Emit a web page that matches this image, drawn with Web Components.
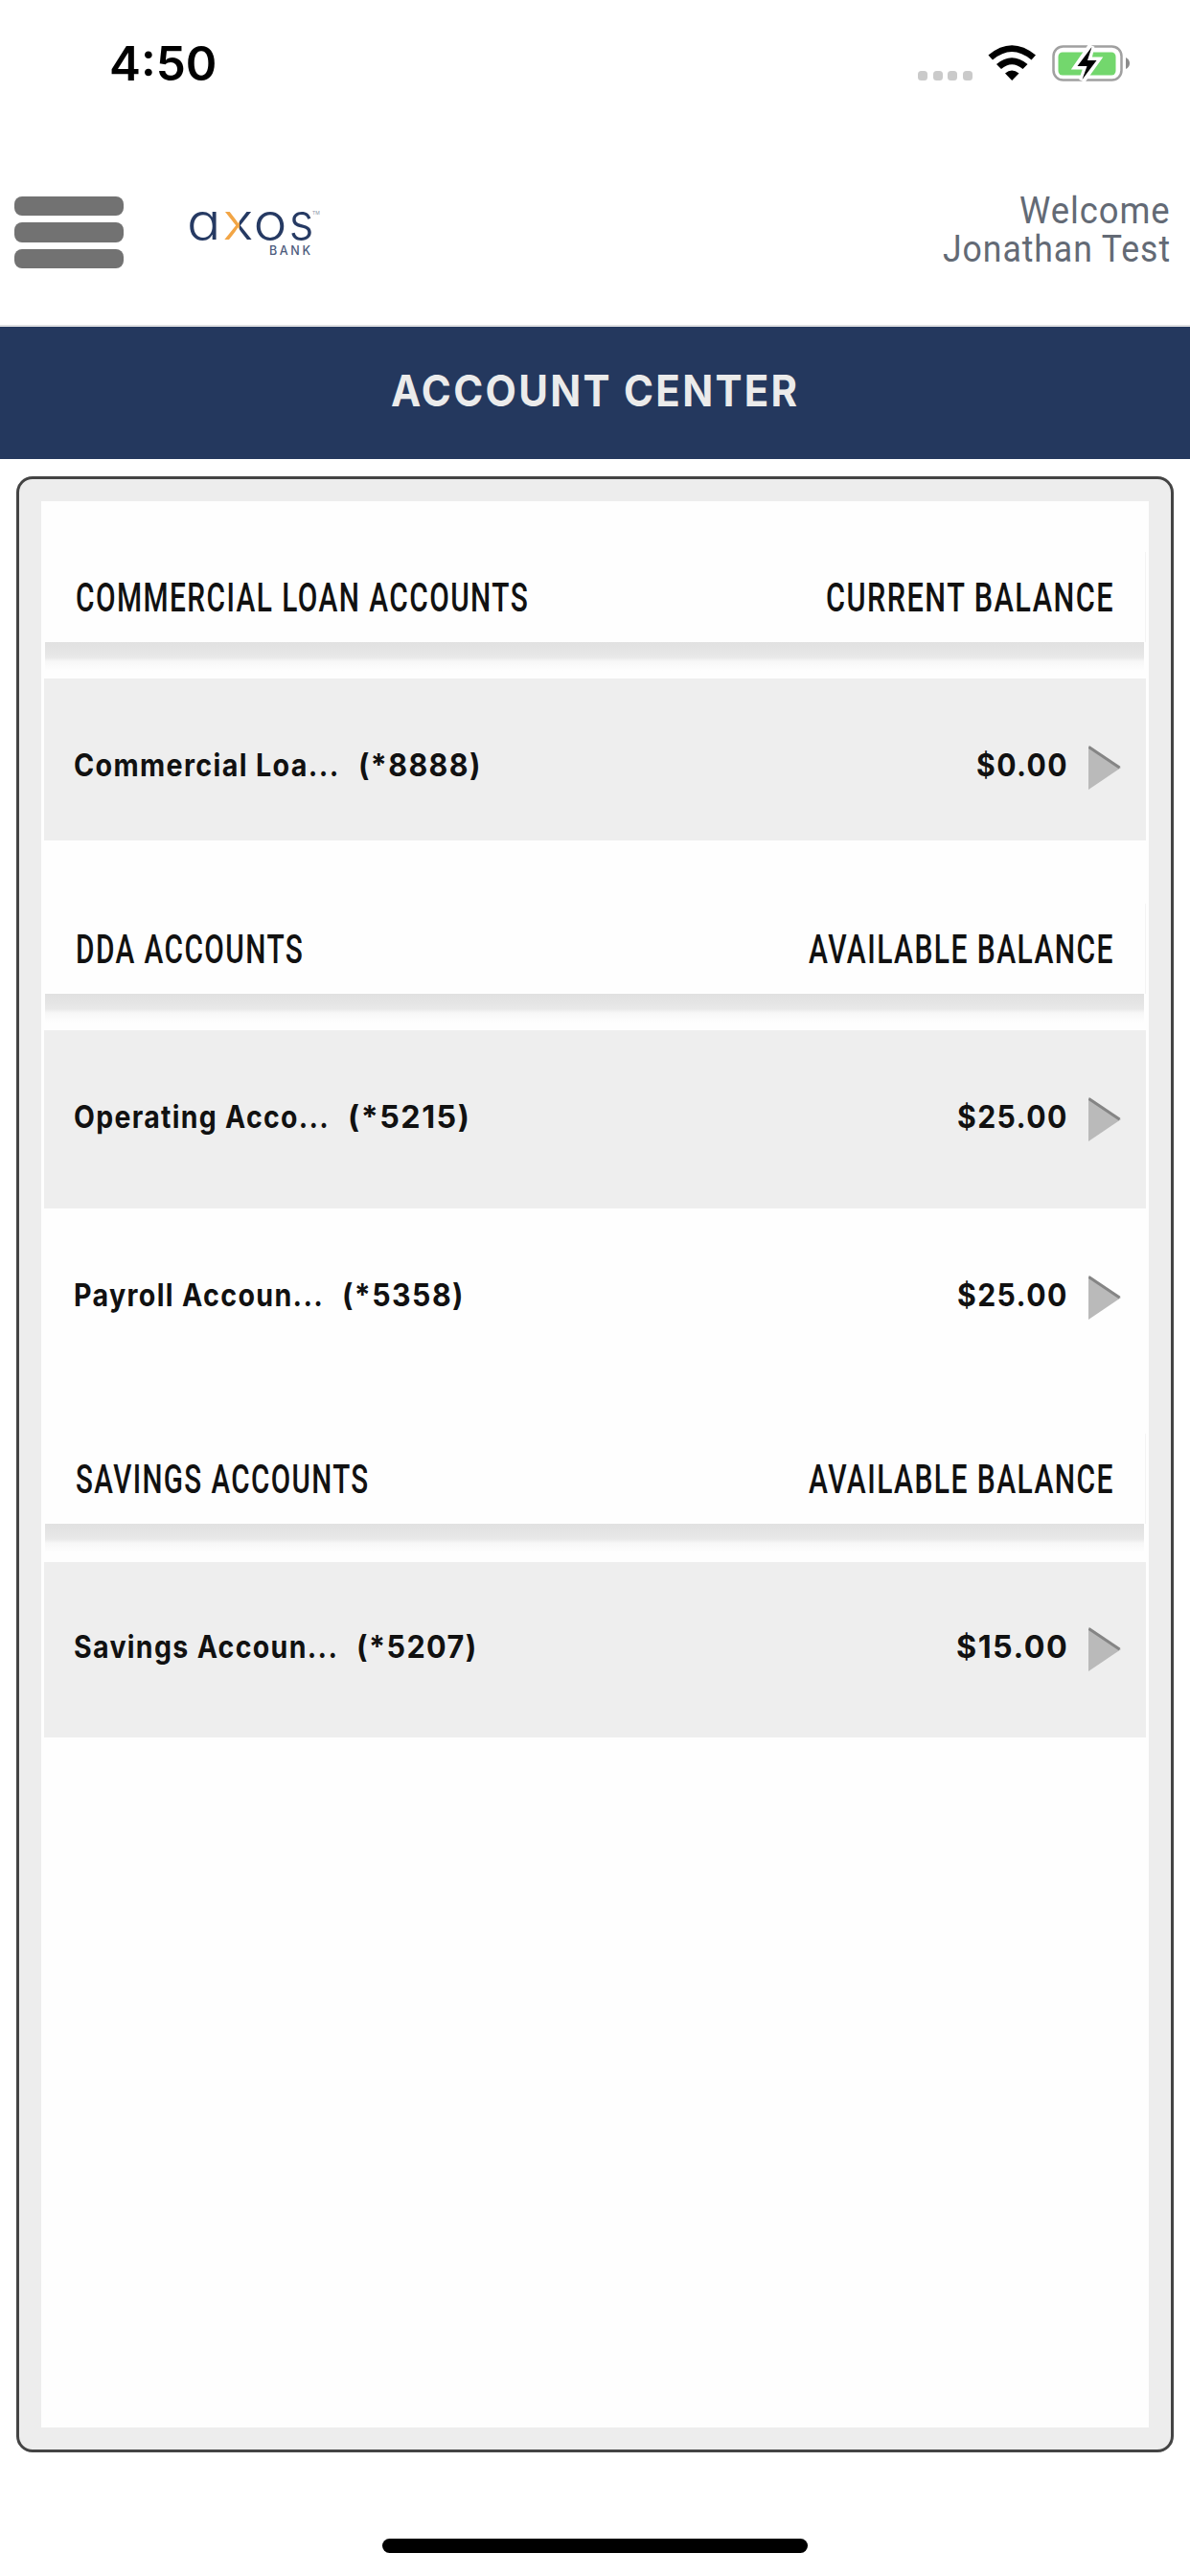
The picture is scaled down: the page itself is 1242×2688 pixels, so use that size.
<!DOCTYPE html>
<html lang="en">
<head>
<meta charset="utf-8">
<title>Account Center</title>
<style>
  body {
    margin: 0;
    background: #fff;
    font-family: Inter, "Liberation Sans", sans-serif;
    color: #111;
  }
</style>
</head>
<body>
<app-screen>
  <status-bar slot="top" time="4:50"></status-bar>
  <app-header slot="top">
    <fit-text width="158">Welcome</fit-text>
    <fit-text width="238">Jonathan Test</fit-text>
  </app-header>
  <title-bar slot="top"><fit-text width="426">ACCOUNT CENTER</fit-text></title-bar>

  <account-group style="--head: 147px; --shade: 38px">
    <fit-text slot="name" width="473">COMMERCIAL LOAN ACCOUNTS</fit-text>
    <fit-text slot="balance" width="301">CURRENT BALANCE</fit-text>
    <account-row shaded style="--height: 169px">
      <fit-text slot="name" width="278">Commercial Loa...</fit-text>
      <fit-text slot="number" width="129">(*8888)</fit-text>
      <fit-text slot="amount" width="96">$0.00</fit-text>
    </account-row>
  </account-group>

  <account-group style="--head: 160px; --shade: 38px">
    <fit-text slot="name" width="238">DDA ACCOUNTS</fit-text>
    <fit-text slot="balance" width="319">AVAILABLE BALANCE</fit-text>
    <account-row shaded style="--height: 186px">
      <fit-text slot="name" width="267">Operating Acco...</fit-text>
      <fit-text slot="number" width="128">(*5215)</fit-text>
      <fit-text slot="amount" width="116">$25.00</fit-text>
    </account-row>
    <account-row style="--height: 185px">
      <fit-text slot="name" width="261">Payroll Accoun...</fit-text>
      <fit-text slot="number" width="128">(*5358)</fit-text>
      <fit-text slot="amount" width="116">$25.00</fit-text>
    </account-row>
  </account-group>

  <account-group style="--head: 144px; --shade: 40px">
    <fit-text slot="name" width="307">SAVINGS ACCOUNTS</fit-text>
    <fit-text slot="balance" width="319">AVAILABLE BALANCE</fit-text>
    <account-row shaded style="--height: 183px; --top: 68px">
      <fit-text slot="name" width="276">Savings Accoun...</fit-text>
      <fit-text slot="number" width="127">(*5207)</fit-text>
      <fit-text slot="amount" width="117">$15.00</fit-text>
    </account-row>
  </account-group>
</app-screen>

<script>
function template(html) {
  const element = document.createElement('template');
  element.innerHTML = html;
  return element;
}

class BaseElement extends HTMLElement {
  constructor() {
    super();
    this.attachShadow({ mode: 'open' });
    this.shadowRoot.appendChild(this.constructor.template.content.cloneNode(true));
  }
}

// One line of text, condensed or stretched to the given width.
class FitText extends BaseElement {
  static template = template(`
    <style>
      :host {
        display: block;
        white-space: nowrap;
      }

      span {
        display: inline-block;
        vertical-align: top;
        transform-origin: 0 50%;
      }
    </style>
    <span><slot></slot></span>
  `);

  connectedCallback() {
    const width = Number(this.getAttribute('width'));
    const span = this.shadowRoot.querySelector('span');
    this.style.width = `${width}px`;
    span.style.transform = `scaleX(${width / span.offsetWidth})`;
  }
}

class AppScreen extends BaseElement {
  static template = template(`
    <style>
      :host {
        display: flex;
        flex-direction: column;
        height: 2688px;
      }

      main {
        flex: 1;
        box-sizing: border-box;
        margin: 18px 17px 0;
        padding: 23px;
        border: 3px solid #444;
        border-radius: 17px;
        background: #ededed;
      }

      .sheet {
        height: 100%;
        box-sizing: border-box;
        padding: 0 3px;
        background: #fefefe;
      }

      footer {
        height: 129px;
        display: flex;
        justify-content: center;
      }

      .home {
        width: 444px;
        height: 15px;
        margin-top: 90px;
        border-radius: 8px;
        background: #000;
      }
    </style>
    <slot name="top"></slot>
    <main><div class="sheet"><slot></slot></div></main>
    <footer><div class="home"></div></footer>
  `);
}

class StatusBar extends BaseElement {
  static template = template(`
    <style>
      :host {
        display: flex;
        justify-content: space-between;
        box-sizing: border-box;
        height: 132px;
        padding: 37px 62px 0 114px;
      }

      fit-text {
        font-size: 49px;
        font-weight: 600;
        line-height: 60px;
        color: #000;
      }

      svg {
        display: block;
        width: 224px;
        height: 60px;
      }
    </style>
    <fit-text width="112"></fit-text>
    <svg viewBox="956 37 224 60">
      <g fill="#cacaca">
        <rect x="958" y="74" width="10" height="10" rx="3.5"/>
        <rect x="974" y="74" width="10" height="10" rx="3.5"/>
        <rect x="989" y="74" width="10" height="10" rx="3.5"/>
        <rect x="1005" y="74" width="10" height="10" rx="3.5"/>
      </g>
      <path d="M1031.500 57.500Q1056 37 1081 57.500L1076.500 62.500Q1056 45.500 1036 62.500Z"/>
      <path d="M1040 67Q1056 53.500 1072.500 67L1067.500 72Q1056 62.500 1045 72Z"/>
      <path d="M1049 76.500Q1056 70.500 1063.500 76.500L1056.200 84Z"/>
      <rect x="1099.500" y="48.500" width="71" height="35" rx="10" fill="none" stroke="#a0a0a0" stroke-width="2.500"/>
      <path d="M1175 60Q1179 62 1179 66T1175 72Z" fill="#8c8c8c"/>
      <rect x="1104.500" y="54.500" width="60" height="24" rx="4.500" fill="#73d76d"/>
      <path d="M1139 48L1124.500 69H1134.500L1129.500 84L1144.500 63H1135.500Z" stroke="#fff" stroke-width="7"/>
      <path d="M1139.500 49L1124.500 69H1134.500L1129.500 83L1144.500 63H1135Z"/>
    </svg>
  `);

  constructor() {
    super();
    this.shadowRoot.querySelector('fit-text').textContent = this.getAttribute('time');
  }
}

class AppHeader extends BaseElement {
  static template = template(`
    <style>
      :host {
        display: flex;
        align-items: flex-start;
        box-sizing: border-box;
        height: 209px;
        padding: 73px 20px 0 15px;
        border-bottom: 2px solid #dfe0e2;
      }

      .menu {
        display: flex;
        flex-direction: column;
        gap: 7px;
        width: 114px;
      }

      .menu i {
        height: 20.300px;
        border-radius: 8px;
        background: #727272;
      }

      svg {
        display: block;
        width: 145px;
        height: 90px;
        margin: -15px 0 0 65px;
        font-family: Inter, "Liberation Sans", sans-serif;
      }

      .user {
        display: flex;
        flex-direction: column;
        align-items: flex-end;
        margin: -5px 0 0 auto;
        font-family: Roboto, "Open Sans", sans-serif;
        font-size: 38px;
        line-height: 40px;
        letter-spacing: 1px;
        color: #636a75;
      }
    </style>
    <div class="menu"><i></i><i></i><i></i></div>
    <svg viewBox="194 190 145 90">
      <linearGradient id="cross">
        <stop offset="0.550" stop-color="#f2a545"/>
        <stop offset="0.550" stop-color="#263a63"/>
      </linearGradient>
      <g fill="#263a63" font-size="52" font-weight="300">
        <text x="195" y="249.500" textLength="35.500" lengthAdjust="spacingAndGlyphs" style="font-feature-settings: 'cv11'">a</text>
        <text x="232.500" y="249.500" textLength="32" lengthAdjust="spacingAndGlyphs" fill="url(#cross)">x</text>
        <text x="264.500" y="249.500" textLength="35" lengthAdjust="spacingAndGlyphs">o</text>
        <text x="301.500" y="249.500" textLength="26" lengthAdjust="spacingAndGlyphs">s</text>
      </g>
      <text x="326" y="224" font-size="5" fill="#8a93a6">TM</text>
      <text x="281" y="266" font-size="12.500" font-weight="500" fill="#4c5b7c" textLength="43">BANK</text>
    </svg>
    <div class="user"><slot></slot></div>
  `);
}

class TitleBar extends BaseElement {
  static template = template(`
    <style>
      :host {
        display: flex;
        align-items: center;
        justify-content: center;
        height: 138px;
        box-sizing: border-box;
        padding-bottom: 5px;
        background: #24385e;
        color: #ebebeb;
        font-size: 45.500px;
        font-weight: 700;
        line-height: 56px;
        letter-spacing: 2.500px;
      }
    </style>
    <slot></slot>
  `);
}

class AccountGroup extends BaseElement {
  static template = template(`
    <style>
      :host {
        display: block;
      }

      header {
        display: flex;
        align-items: flex-end;
        height: var(--head);
      }

      .heading {
        display: flex;
        flex: 1;
        justify-content: space-between;
        box-sizing: border-box;
        height: 94px;
        padding: 28px 32px 0 33px;
        border-right: 1px solid #f4f4f4;
        font-family: Roboto, "Liberation Sans", sans-serif;
        font-size: 42px;
        font-weight: 500;
        line-height: 40px;
        letter-spacing: 2px;
      }

      .shade {
        height: var(--shade);
        margin: 0 2px 0 1px;
        background: linear-gradient(#e1e1e1, #e5e5e5 10px, #e9e9e9 16px, #f7f7f7 20px, #fefefe 30px);
      }
    </style>
    <header>
      <div class="heading">
        <slot name="name"></slot>
        <slot name="balance"></slot>
      </div>
    </header>
    <div class="shade"></div>
    <slot></slot>
  `);
}

class AccountRow extends BaseElement {
  static template = template(`
    <style>
      :host {
        display: flex;
        box-sizing: border-box;
        height: var(--height);
        padding: var(--top, 70px) 25px 0 31px;
        font-size: 32px;
        font-weight: 650;
        line-height: 41px;
        letter-spacing: 1.500px;
      }

      :host([shaded]) {
        background: #eee;
      }

      .number {
        margin-left: 19px;
      }

      .amount {
        margin: 0 21px 0 auto;
      }

      svg {
        display: block;
        width: 35px;
        height: 47px;
      }
    </style>
    <slot name="name"></slot>
    <div class="number"><slot name="number"></slot></div>
    <div class="amount"><slot name="amount"></slot></div>
    <svg viewBox="0 0 35 47">
      <path d="M0 0L34 23L0 46Z" fill="#bababa"/>
      <path d="M0.500 1.500L32.500 23" stroke="#858585" stroke-width="3"/>
    </svg>
  `);
}

window.customElements.define('fit-text', FitText);
window.customElements.define('app-screen', AppScreen);
window.customElements.define('status-bar', StatusBar);
window.customElements.define('app-header', AppHeader);
window.customElements.define('title-bar', TitleBar);
window.customElements.define('account-group', AccountGroup);
window.customElements.define('account-row', AccountRow);

// Slots inherit their final font only once every element has its shadow root.
function refit(root) {
  root.querySelectorAll('*').forEach((element) => {
    if (element instanceof FitText) element.connectedCallback();
    if (element.shadowRoot) refit(element.shadowRoot);
  });
}

refit(document);
</script>
</body>
</html>
